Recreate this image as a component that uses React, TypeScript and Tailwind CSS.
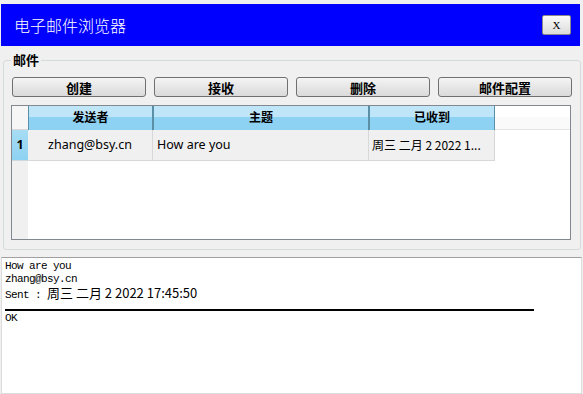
import React from "react";

const cjk = "font-['Noto_Sans_CJK_SC','Noto_Sans',sans-serif]";

const buttons = ["创建", "接收", "删除", "邮件配置"];

const columns = [
  { title: "发送者", width: "w-[125px]" },
  { title: "主题", width: "w-[216px]" },
  { title: "已收到", width: "w-[126px]" },
];

function ToolButton({ label }: { label: string }) {
  return (
    <button
      className={`${cjk} flex h-[20px] w-[134px] items-center justify-center rounded-[3px] border border-[#707070] bg-gradient-to-b from-[#f4f4f4] to-[#dadada] text-[13px] font-bold leading-none text-black`}
    >
      {label}
    </button>
  );
}

function MailTable() {
  return (
    <div className="flex h-[135px] w-[560px] flex-col border border-[#828790] bg-white">
      {/* header */}
      <div className="flex h-[24px]">
        <div className="w-[16px] border-b border-[#d8d8d8] bg-[#f6f6f6]" />
        {columns.map((c) => (
          <div
            key={c.title}
            className={`${c.width} ${cjk} flex flex-col border-x border-[#5b8fa8] text-[12px] font-bold leading-none text-black`}
          >
            <div className="h-[11px] bg-[#bee6f8]" />
            <div className="relative flex h-[13px] items-start justify-center bg-[#8dd2f2]">
              <span className="absolute top-[-6px]">{c.title}</span>
            </div>
          </div>
        ))}
        <div className="flex flex-1 flex-col border-b border-[#e4e4e4]">
          <div className="h-[11px] bg-white" />
          <div className="flex-1 bg-[#fafafa]" />
        </div>
      </div>
      {/* row */}
      <div className="flex h-[31px] font-['Noto_Sans','Noto_Sans_CJK_SC',sans-serif] text-[12.5px] text-black">
        <div className="flex w-[16px] items-center justify-center border-b border-[#cfd8dc] bg-gradient-to-b from-[#a7dcf4] to-[#8dd2f2] font-bold">
          1
        </div>
        <div className="flex w-[125px] items-center justify-center border-r border-b border-[#d8d8d8] bg-[#f0f0f0]">
          zhang@bsy.cn
        </div>
        <div className="flex w-[216px] items-center border-r border-b border-[#d8d8d8] bg-[#f0f0f0] pl-[4px]">
          How are you
        </div>
        <div className={`${cjk} flex w-[126px] items-center overflow-hidden whitespace-pre border-r border-b border-[#d8d8d8] bg-[#f0f0f0] pl-[3px] text-[12px]`}>
          周三 二月 2 2022 1...
        </div>
      </div>
      <div className="flex flex-1">
        <div className="w-[16px] bg-[#f0f0f0]" />
        <div className="flex-1 bg-white" />
      </div>
    </div>
  );
}

export default function App() {
  return (
    <div className="flex h-[394px] w-[583px] flex-col overflow-hidden bg-[#f0f0f0] pt-[4px]">
      <div className="ml-[1px] mr-[3px] flex h-[42px] items-center justify-between bg-[#0000ff] pl-[13px] pr-[9px]">
        <span className={`${cjk} text-[16px] font-light text-white`}>电子邮件浏览器</span>
        <button className="flex h-[20px] w-[29px] items-center justify-center rounded-[2px] border border-[#8a8a8a] bg-gradient-to-b from-[#fafafa] to-[#dcdcdc] font-['Liberation_Serif',serif] text-[11px] leading-none text-black">
          X
        </button>
      </div>

      <fieldset className="mx-[3px] mt-[6px] h-[198px] shrink-0 rounded-[3px] border border-[#d5dadd] px-[8px] pb-[9px]">
        <legend className={`${cjk} ml-[-1px] px-[2px] text-[13px] font-bold leading-[16px] text-black`}>
          邮件
        </legend>
        <div className="mt-[9px] flex gap-[8px]">
          {buttons.map((b) => (
            <ToolButton key={b} label={b} />
          ))}
        </div>
        <div className="ml-[-1px] mt-[8px]">
          <MailTable />
        </div>
      </fieldset>

      <div className="mx-[1px] mt-[7px] flex-1 border border-t-[#a0a0a0] border-x-[#dcdcdc] border-b-[#dcdcdc] bg-white pl-[3px] pt-[2px] font-['Liberation_Mono',monospace] text-[11px] leading-[13px] tracking-[-0.6px] text-black">
        <div>How are you</div>
        <div>zhang@bsy.cn</div>
        <div className="whitespace-pre">
          Sent : <span className={`${cjk} text-[13px] leading-[13px] tracking-normal`}>周三 二月 2 2022 17:45:50</span>
        </div>
        <div className="mt-[7px] h-[2px] w-[529px] bg-black" />
        <div className="mt-[1px]">OK</div>
      </div>
    </div>
  );
}
